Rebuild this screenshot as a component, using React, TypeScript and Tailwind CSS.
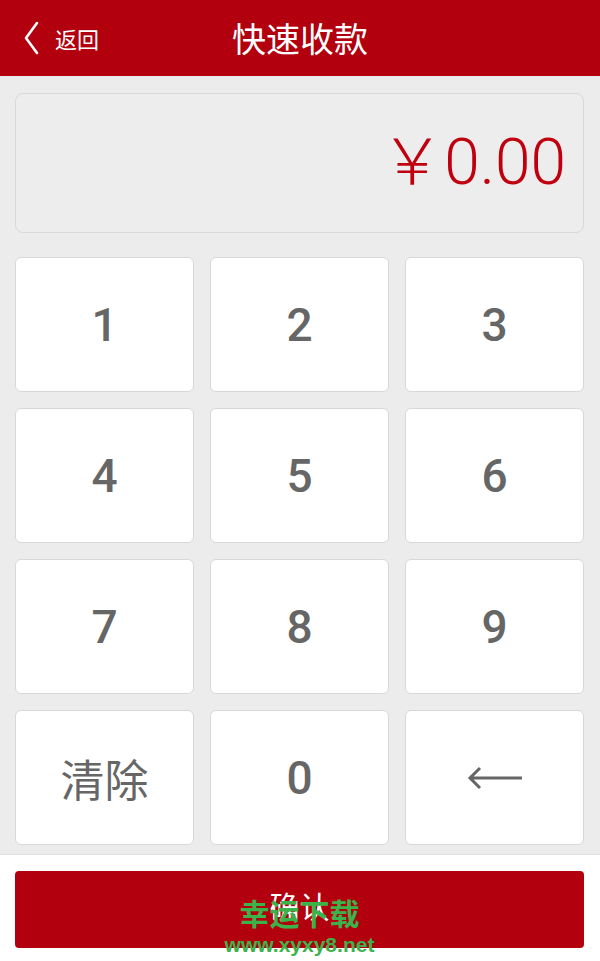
import React, { useState } from 'react'

const keys = ['1', '2', '3', '4', '5', '6', '7', '8', '9', '清除', '0', '←']

const App: React.FC = () => {
  const [amount, setAmount] = useState('0.00')

  const press = (k: string) => {
    // simple demo handler, display stays formatted
    if (k === '清除') setAmount('0.00')
  }

  return (
    <div className="w-[600px] h-[961px] flex flex-col bg-[#ececec] font-['Roboto','Noto_Sans_CJK_SC',sans-serif] overflow-hidden">
      {/* Header */}
      <div className="h-[76px] shrink-0 bg-[#b2000e] relative flex items-center justify-center text-white">
        <button className="absolute left-[23px] top-0 h-full flex items-center gap-[16px]">
          <svg width="16" height="34" viewBox="0 0 16 34" fill="none">
            <path d="M14 2 L3 17 L14 32" stroke="white" strokeWidth="2.6" strokeLinecap="round" strokeLinejoin="round" />
          </svg>
          <span className="text-[22px] font-['Noto_Sans_CJK_SC',sans-serif] leading-none">返回</span>
        </button>
        <h1 className="text-[34px] font-['Noto_Sans_CJK_SC',sans-serif] font-normal leading-none">快速收款</h1>
      </div>

      {/* Keypad area */}
      <div className="flex-1 pl-[15px] pr-[16px] pt-[17px]">
        <div className="h-[140px] rounded-[8px] border border-[#d9d9d9] bg-[#ededed] flex items-center justify-end pr-[17px]">
          <span className="text-[64px] font-light text-[#c0000f] leading-none">￥{amount}</span>
        </div>

        <div className="mt-[24px] grid grid-cols-3 gap-x-[16px] gap-y-[16px]">
          {keys.map(k => (
            <button
              key={k}
              onClick={() => press(k)}
              className="h-[135px] rounded-[6px] border-[1.5px] border-[#d8d8d8] bg-white flex items-center justify-center text-[#666666]"
            >
              {k === '清除' ? (
                <span className="text-[44px] font-['Noto_Sans_CJK_SC',sans-serif] leading-none">{k}</span>
              ) : k === '←' ? (
                <svg width="56" height="30" viewBox="0 0 56 30" fill="none">
                  <path d="M3 15 H55 M13 5 L3 15 L13 25" stroke="#666666" strokeWidth="3" />
                </svg>
              ) : (
                <span className="text-[46px] font-medium leading-none">{k}</span>
              )}
            </button>
          ))}
        </div>
      </div>

      {/* Bottom confirm */}
      <div className="h-[107px] shrink-0 bg-white border-t border-[#dedede] pl-[15px] pr-[16px] pt-[16px]">
        <div className="relative h-[77px] rounded-[4px] bg-[#b2000e] flex items-center justify-center">
          <span className="text-white text-[30px] font-['Noto_Sans_CJK_SC',sans-serif] leading-none -mt-[10px]">确认</span>
          {/* watermark */}
          <div className="absolute left-0 right-0 top-[26px] flex flex-col items-center pointer-events-none">
            <span className="text-[30px] font-bold text-[#3cb34a] leading-none font-['Noto_Sans_CJK_SC',sans-serif]">幸运下载</span>
            <span className="text-[21px] font-bold text-[#3cb34a] leading-none mt-[7px] font-['Liberation_Sans',sans-serif]">www.xyxy8.net</span>
          </div>
        </div>
      </div>
    </div>
  )
}

export default App
